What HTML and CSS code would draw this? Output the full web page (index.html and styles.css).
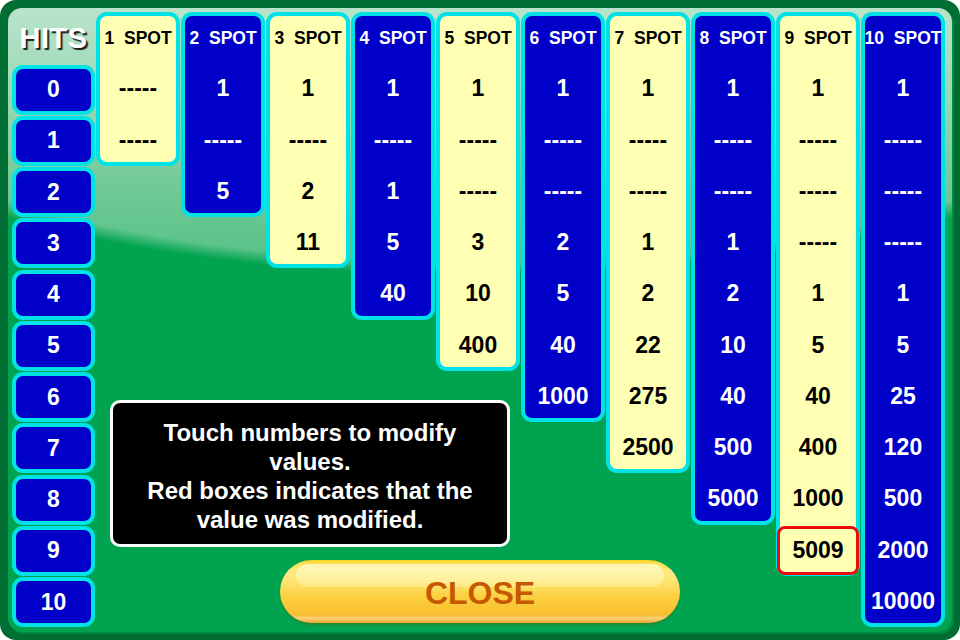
FILE: index.html
```html
<!DOCTYPE html>
<html lang="en">
<head>
<meta charset="utf-8">
<title>Keno Payouts</title>
<link rel="stylesheet" href="styles.css">
</head>
<body>
<div class="device">
  <div class="board">
    <div class="hits-label">HITS</div>
    <div class="hit r2">0</div>
    <div class="hit r3">1</div>
    <div class="hit r4">2</div>
    <div class="hit r5">3</div>
    <div class="hit r6">4</div>
    <div class="hit r7">5</div>
    <div class="hit r8">6</div>
    <div class="hit r9">7</div>
    <div class="hit r10">8</div>
    <div class="hit r11">9</div>
    <div class="hit r12">10</div>

    <div class="col yellow c2 span3">
      <div class="head">1 SPOT</div>
      <div class="cell">-----</div><div class="cell">-----</div>
    </div>
    <div class="col blue c3 span4">
      <div class="head">2 SPOT</div>
      <div class="cell">1</div><div class="cell">-----</div><div class="cell">5</div>
    </div>
    <div class="col yellow c4 span5">
      <div class="head">3 SPOT</div>
      <div class="cell">1</div><div class="cell">-----</div><div class="cell">2</div><div class="cell">11</div>
    </div>
    <div class="col blue c5 span6">
      <div class="head">4 SPOT</div>
      <div class="cell">1</div><div class="cell">-----</div><div class="cell">1</div><div class="cell">5</div><div class="cell">40</div>
    </div>
    <div class="col yellow c6 span7">
      <div class="head">5 SPOT</div>
      <div class="cell">1</div><div class="cell">-----</div><div class="cell">-----</div><div class="cell">3</div><div class="cell">10</div><div class="cell">400</div>
    </div>
    <div class="col blue c7 span8">
      <div class="head">6 SPOT</div>
      <div class="cell">1</div><div class="cell">-----</div><div class="cell">-----</div><div class="cell">2</div><div class="cell">5</div><div class="cell">40</div><div class="cell">1000</div>
    </div>
    <div class="col yellow c8 span9">
      <div class="head">7 SPOT</div>
      <div class="cell">1</div><div class="cell">-----</div><div class="cell">-----</div><div class="cell">1</div><div class="cell">2</div><div class="cell">22</div><div class="cell">275</div><div class="cell">2500</div>
    </div>
    <div class="col blue c9 span10">
      <div class="head">8 SPOT</div>
      <div class="cell">1</div><div class="cell">-----</div><div class="cell">-----</div><div class="cell">1</div><div class="cell">2</div><div class="cell">10</div><div class="cell">40</div><div class="cell">500</div><div class="cell">5000</div>
    </div>
    <div class="col yellow c10 span11">
      <div class="head">9 SPOT</div>
      <div class="cell">1</div><div class="cell">-----</div><div class="cell">-----</div><div class="cell">-----</div><div class="cell">1</div><div class="cell">5</div><div class="cell">40</div><div class="cell">400</div><div class="cell">1000</div><div class="cell mod"><span>5009</span></div>
    </div>
    <div class="col blue c11 span12">
      <div class="head">10 SPOT</div>
      <div class="cell">1</div><div class="cell">-----</div><div class="cell">-----</div><div class="cell">-----</div><div class="cell">1</div><div class="cell">5</div><div class="cell">25</div><div class="cell">120</div><div class="cell">500</div><div class="cell">2000</div><div class="cell">10000</div>
    </div>

    <div class="lower">
      <div class="info">Touch numbers to modify values.<br>Red boxes indicates that the value was modified.</div>
      <button class="close"><span class="close-label">CLOSE</span></button>
    </div>
  </div>
</div>
</body>
</html>
```

FILE: styles.css
```css
html, body {
  margin: 0;
  padding: 0;
  background: #ffffff;
}
body {
  font-family: "Liberation Sans", Arial, Helvetica, sans-serif;
  font-weight: bold;
}
.device {
  width: 960px;
  height: 640px;
  box-sizing: border-box;
  padding: 8px;
  background: #006e32;
  border-radius: 16px;
}
.board {
  width: 944px;
  height: 624px;
  box-sizing: border-box;
  padding: 4px;
  border-radius: 14px;
  box-shadow: 2px 2px 0 #008a40;
  background:
    radial-gradient(ellipse 760px 268px at 472px 0px, rgba(0,163,79,0) 95%, #00a34f 100%),
    linear-gradient(to bottom, #b9e4cb 0px, #9ad8b3 90px, #6cc894 190px, #52c083 270px);
  display: grid;
  grid-template-columns: 83px repeat(10, 84px);
  grid-template-rows: repeat(12, 51.25px);
  column-gap: 1px;
}

/* hits column */
.hits-label {
  grid-column: 1;
  grid-row: 1;
  display: flex;
  align-items: center;
  justify-content: center;
  color: #ffffff;
  font-size: 29px;
  letter-spacing: 0.5px;
  padding-top: 2px;
  text-shadow: 2px 2px 1px #1e1e1e;
}
.hit {
  grid-column: 1;
  align-self: end;
  height: 50px;
  box-sizing: border-box;
  border: 4px solid #00e2e6;
  border-radius: 11px;
  background: #0000c8;
  color: #ffffff;
  font-size: 23px;
  display: flex;
  align-items: center;
  justify-content: center;
}
.r2 { grid-row: 2; } .r3 { grid-row: 3; } .r4 { grid-row: 4; } .r5 { grid-row: 5; }
.r6 { grid-row: 6; } .r7 { grid-row: 7; } .r8 { grid-row: 8; } .r9 { grid-row: 9; }
.r10 { grid-row: 10; } .r11 { grid-row: 11; } .r12 { grid-row: 12; }

/* spot columns */
.col {
  grid-row-start: 1;
  box-sizing: border-box;
  border: 4px solid #00e2e6;
  border-radius: 11px;
  display: flex;
  flex-direction: column;
}
.col.yellow { background: #ffffb4; color: #000000; }
.col.blue { background: #0000c8; color: #ffffff; }
.c2 { grid-column: 2; } .c3 { grid-column: 3; } .c4 { grid-column: 4; } .c5 { grid-column: 5; }
.c6 { grid-column: 6; } .c7 { grid-column: 7; } .c8 { grid-column: 8; } .c9 { grid-column: 9; }
.c10 { grid-column: 10; } .c11 { grid-column: 11; }
.span3 { grid-row-end: span 3; } .span4 { grid-row-end: span 4; } .span5 { grid-row-end: span 5; }
.span6 { grid-row-end: span 6; } .span7 { grid-row-end: span 7; } .span8 { grid-row-end: span 8; }
.span9 { grid-row-end: span 9; } .span10 { grid-row-end: span 10; } .span11 { grid-row-end: span 11; }
.span12 { grid-row-end: span 12; }

.head, .cell {
  height: 51.25px;
  flex: none;
  display: flex;
  align-items: center;
  justify-content: center;
  white-space: nowrap;
}
.head {
  margin-top: -4px;
  font-size: 17.5px;
  word-spacing: 5px;
  padding-top: 1px;
  box-sizing: border-box;
}
.cell {
  font-size: 23px;
  position: relative;
}
.col > .cell:last-child {
  margin-bottom: -4px;
}
.cell.mod::before {
  content: "";
  position: absolute;
  top: 1px;
  bottom: 1px;
  left: -3px;
  right: -3px;
  border: 3px solid #e80e0e;
  border-radius: 8px;
  background: #ffffb4;
}
.cell.mod span {
  position: relative;
}

/* lower area: info + close */
.lower {
  grid-column: 2 / 9;
  grid-row: 8 / 13;
  display: flex;
  flex-direction: column;
  align-items: flex-start;
}
.info {
  margin-top: 29px;
  margin-left: 14px;
  width: 400px;
  height: 147px;
  box-sizing: border-box;
  border: 3px solid #ffffff;
  border-radius: 10px;
  background: #000000;
  color: #ffffff;
  font-size: 24px;
  line-height: 29px;
  text-align: center;
  padding: 15px 20px 0;
}
.close {
  position: relative;
  margin-top: 13px;
  margin-left: 184px;
  width: 400px;
  height: 63px;
  border: none;
  border-radius: 32px;
  padding: 0;
  font-family: "Liberation Sans", Arial, Helvetica, sans-serif;
  font-weight: bold;
  font-size: 32px;
  line-height: 63px;
  color: #c75800;
  background: linear-gradient(to bottom, #f7d21e 0%, #fde35a 6%, #feea84 20%, #fde067 40%, #fcd040 58%, #f9c332 80%, #f7bd36 88%, #fbd27a 92%, #e9a82a 100%);
  box-shadow: 0 2px 2px rgba(120, 80, 0, 0.35);
  overflow: hidden;
}
.close::before {
  content: "";
  position: absolute;
  left: 16px;
  right: 16px;
  top: 4px;
  height: 23px;
  border-radius: 14px;
  background: linear-gradient(to bottom, rgba(255,250,200,0.85), rgba(255,244,170,0.45));
}
.close-label {
  position: relative;
  display: block;
  padding-top: 2px;
}
```
